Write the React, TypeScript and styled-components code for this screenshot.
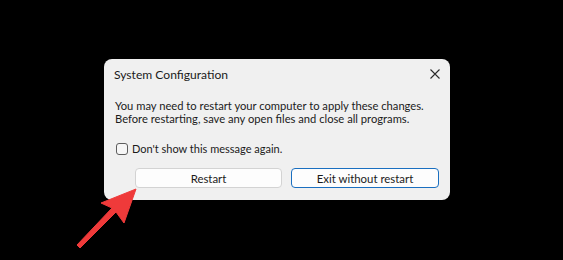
import { createGlobalStyle } from "styled-components";
import styled from "styled-components";

const GlobalStyle = createGlobalStyle`
  html, body {
    margin: 0;
    padding: 0;
    background: #000;
  }
  body {
    font-family: Lato, "Noto Sans", sans-serif;
  }
`;

const Page = styled.div`
  position: relative;
  width: 563px;
  height: 260px;
  box-sizing: border-box;
  padding: 59px 0 0 104px;
  overflow: hidden;
  background: #000;
`;

const Dialog = styled.div`
  width: 346px;
  height: 141px;
  box-sizing: border-box;
  background: #f0f0f0;
  border-radius: 8px;
  display: flex;
  flex-direction: column;
  color: #1b1b1b;
`;

const TitleBar = styled.div`
  height: 30px;
  display: flex;
  align-items: center;
  justify-content: space-between;
  padding: 0 10px;
`;

const Title = styled.span`
  font-size: 12.1px;
  color: #1a1a1a;
  white-space: nowrap;
`;

const Content = styled.div`
  padding: 11px 0 0 11px;
  display: flex;
  flex-direction: column;
`;

const Message = styled.p`
  margin: 0;
  font-size: 11.2px;
  line-height: 12.5px;
  white-space: nowrap;
`;

const CheckRow = styled.label`
  margin-top: 17px;
  height: 13px;
  display: flex;
  align-items: center;
  gap: 4px;
  font-size: 11px;
  line-height: 13px;
  padding-left: 1px;
  white-space: nowrap;
`;

const CheckBox = styled.span`
  width: 12px;
  height: 12px;
  box-sizing: border-box;
  border: 1px solid #5d5d5d;
  border-radius: 3px;
  background: #f6f6f6;
`;

const ButtonRow = styled.div`
  margin-top: 13px;
  display: flex;
  gap: 9px;
  padding-left: 31px;
`;

const Button = styled.button<{ $primary?: boolean }>`
  width: ${(p) => (p.$primary ? 148 : 147)}px;
  height: 20px;
  box-sizing: border-box;
  padding: 0;
  border-radius: 4px;
  border: 1px solid ${(p) => (p.$primary ? "#1a6fc0" : "#d3d3d3")};
  background: #fdfdfd;
  font-family: inherit;
  font-size: 11.4px;
  color: #1b1b1b;
  display: flex;
  align-items: center;
  justify-content: center;
  white-space: nowrap;
`;

const Overlay = styled.svg`
  position: absolute;
  left: 0;
  top: 0;
  pointer-events: none;
`;

function CloseIcon() {
  return (
    <svg width="10" height="10" viewBox="0 0 10 10">
      <path d="M0.5 0.5 L9.5 9.5 M9.5 0.5 L0.5 9.5" stroke="#2b2b2b" strokeWidth="1.1" />
    </svg>
  );
}

export default function App() {
  return (
    <>
      <GlobalStyle />
      <Page>
        <Dialog>
          <TitleBar>
            <Title>System Configuration</Title>
            <CloseIcon />
          </TitleBar>
          <Content>
            <Message>
              You may need to restart your computer to apply these changes.
              <br />
              Before restarting, save any open files and close all programs.
            </Message>
            <CheckRow>
              <CheckBox />
              Don't show this message again.
            </CheckRow>
          </Content>
          <ButtonRow>
            <Button>Restart</Button>
            <Button $primary>Exit without restart</Button>
          </ButtonRow>
        </Dialog>
        <Overlay width="563" height="260" viewBox="0 0 563 260">
          <polygon
            points="136,189 124,223 116,212 80,248 77,245 112,208 101,203"
            fill="#ef3a3a"
            stroke="#ef3a3a"
            strokeWidth="1"
            strokeLinejoin="round"
          />
        </Overlay>
      </Page>
    </>
  );
}
